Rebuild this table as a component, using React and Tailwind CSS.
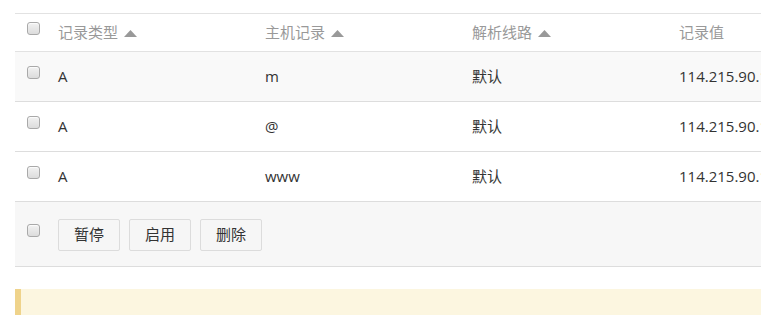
import React from 'react';

const rows = [
  { type: 'A', host: 'm', line: '默认', value: '114.215.90.12' },
  { type: 'A', host: '@', line: '默认', value: '114.215.90.12' },
  { type: 'A', host: 'www', line: '默认', value: '114.215.90.12' },
];

const Checkbox = () => (
  <span className="mb-2 block h-[13px] w-[13px] rounded-[3px] border border-[#a9a9a9] bg-gradient-to-b from-[#f2f2f2] to-[#dcdcdc] shadow-[inset_0_1px_1px_rgba(255,255,255,0.8)]" />
);

const Caret = () => (
  <svg className="ml-[6px] mt-[1px]" width="13" height="7" viewBox="0 0 13 7">
    <path d="M6.5 0L13 7H0z" fill="#999" />
  </svg>
);

const App = () => {
  return (
    <div
      className="h-[315px] w-[761px] overflow-hidden bg-white pl-[15px] pt-[13px] text-[15px] text-[#333]"
      style={{ fontFamily: '"Open Sans", "Noto Sans CJK SC", sans-serif' }}
    >
      <div className="w-[900px]">
        {/* Table header */}
        <div className="flex h-[39px] items-center border-y border-[#e2e2e2] text-[#999] whitespace-nowrap">
          <div className="w-[43px] pl-[12px]">
            <Checkbox />
          </div>
          <div className="flex w-[207px] items-center">
            记录类型 <Caret />
          </div>
          <div className="flex w-[207px] items-center">
            主机记录 <Caret />
          </div>
          <div className="flex w-[207px] items-center">
            解析线路 <Caret />
          </div>
          <div className="w-[207px]">记录值</div>
        </div>

        {/* Rows */}
        {rows.map((r, i) => (
          <div
            key={i}
            className={`flex h-[50px] items-center border-b border-[#dddddd] whitespace-nowrap ${i === 0 ? 'bg-[#f9f9f9]' : 'bg-white'}`}
          >
            <div className="w-[43px] pl-[12px]">
              <Checkbox />
            </div>
            <div className="w-[207px]">{r.type}</div>
            <div className="w-[207px]">{r.host}</div>
            <div className="w-[207px]">{r.line}</div>
            <div className="w-[207px]">{r.value}</div>
          </div>
        ))}

        {/* Footer actions */}
        <div className="flex h-[65px] items-center border-b border-[#dddddd] bg-[#f7f7f7]">
          <div className="w-[43px] pl-[12px]">
            <Checkbox />
          </div>
          <div className="flex gap-[9px] pt-[1px]">
            <button className="h-[32px] w-[62px] rounded-[2px] border border-[#dcdcdc] bg-[#f6f6f6] text-[15px] text-[#333]">暂停</button>
            <button className="h-[32px] w-[62px] rounded-[2px] border border-[#dcdcdc] bg-[#f6f6f6] text-[15px] text-[#333]">启用</button>
            <button className="h-[32px] w-[62px] rounded-[2px] border border-[#dcdcdc] bg-[#f6f6f6] text-[15px] text-[#333]">删除</button>
          </div>
        </div>

        {/* Notice */}
        <div className="mt-[22px] h-[40px] border-l-[6px] border-[#efd38b] bg-[#fcf6e0]" />
      </div>
    </div>
  );
};

export default App;
